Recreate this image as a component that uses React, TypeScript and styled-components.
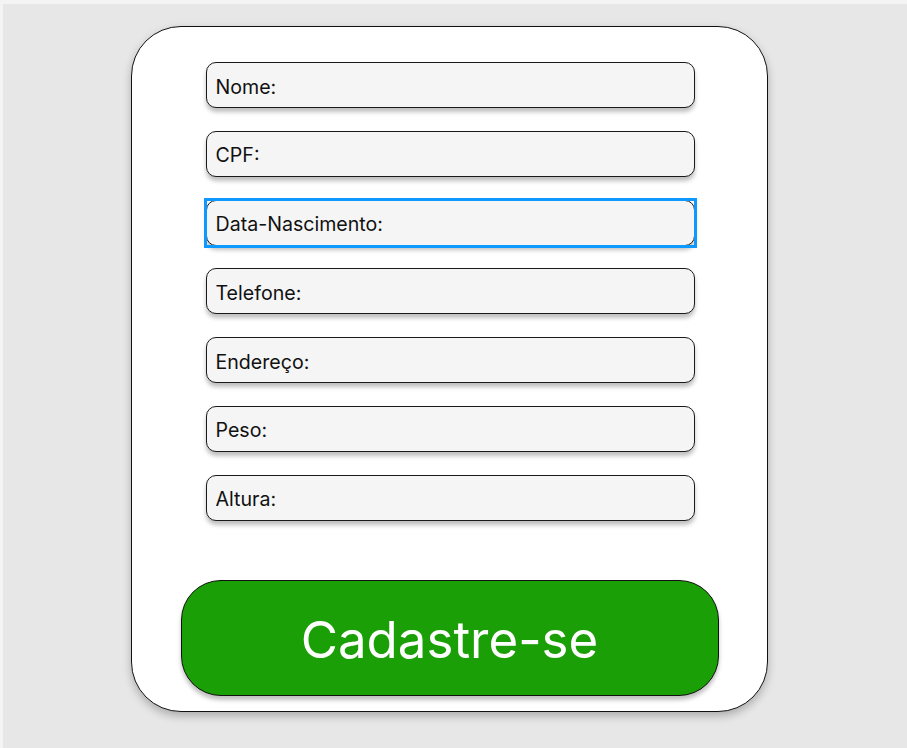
import styled, { createGlobalStyle } from "styled-components";

const fields = [
  "Nome:",
  "CPF:",
  "Data-Nascimento:",
  "Telefone:",
  "Endereço:",
  "Peso:",
  "Altura:",
];

const GlobalStyle = createGlobalStyle`
  html, body {
    margin: 0;
    padding: 0;
    background: #f4f4f4;
  }
  body {
    font-family: Inter, "Liberation Sans", sans-serif;
  }
`;

const Page = styled.div`
  margin: 4px 0 0 3px;
  height: 744px;
  background: #e7e7e7;
  padding: 22px 0 0 128px;
  box-sizing: border-box;
`;

const Card = styled.form`
  width: 637px;
  height: 686px;
  box-sizing: border-box;
  background: #ffffff;
  border: 1.5px solid #111;
  border-radius: 50px;
  box-shadow: 0 4px 8px rgba(0, 0, 0, 0.25);
  padding: 35px 0 0 0;
  display: flex;
  flex-direction: column;
  align-items: center;
`;

const Fields = styled.div`
  display: flex;
  flex-direction: column;
  gap: 22.8px;
  margin-left: 1px;
`;

const Frame = styled.div<{ $focused?: boolean }>`
  display: flex;
  outline: ${(p) => (p.$focused ? "3px solid #0d99ff" : "none")};
  outline-offset: -1px;
`;

const Input = styled.input`
  width: 489px;
  height: 46px;
  box-sizing: border-box;
  background: #f5f5f5;
  border: 1.2px solid #1a1a1a;
  border-radius: 10px;
  box-shadow: 0 4px 4px rgba(0, 0, 0, 0.25);
  padding: 3px 9px 0;
  font-family: Inter, "Liberation Sans", sans-serif;
  font-size: 19.6px;
  color: #111;
  outline: none;
  &::placeholder {
    color: #111;
  }
`;

const Submit = styled.button`
  margin-top: 59px;
  width: 538px;
  height: 116px;
  box-sizing: border-box;
  background: #1b9f06;
  border: 1.2px solid #111;
  border-radius: 40px;
  box-shadow: 0 4px 4px rgba(0, 0, 0, 0.25);
  color: #ffffff;
  font-family: Inter, "Liberation Sans", sans-serif;
  font-size: 51px;
  font-weight: 400;
  padding-top: 4px;
  cursor: pointer;
`;

export default function App() {
  return (
    <>
      <GlobalStyle />
      <Page>
        <Card onSubmit={(e) => e.preventDefault()}>
          <Fields>
            {fields.map((f) => (
              <Frame key={f} $focused={f === "Data-Nascimento:"}>
                <Input placeholder={f} />
              </Frame>
            ))}
          </Fields>
          <Submit type="submit">Cadastre-se</Submit>
        </Card>
      </Page>
    </>
  );
}
